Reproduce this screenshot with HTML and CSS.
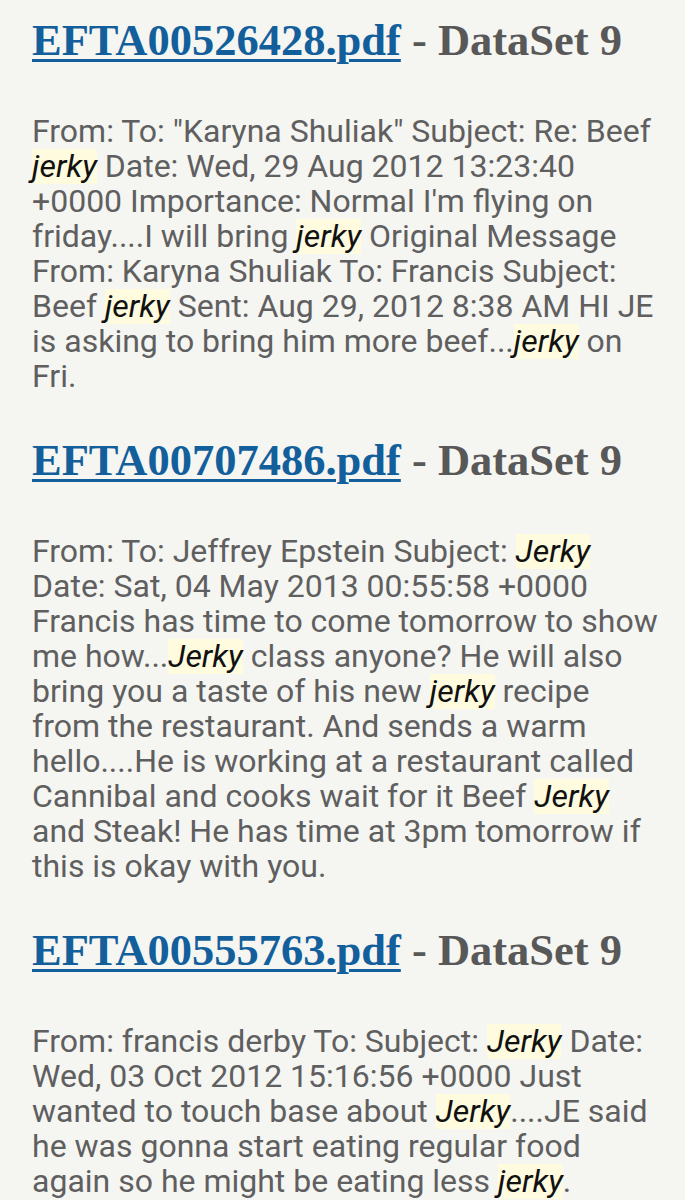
FILE: index.html
```html
<!DOCTYPE html>
<html lang="en">
<head>
  <meta charset="UTF-8" />
  <meta name="viewport" content="width=device-width, initial-scale=1" />
  <title>Search results: jerky</title>
  <link rel="stylesheet" href="styles.css">
</head>
<body>
  <div class="results">
    <div class="result">
      <h2 class="result-title"><a href="#">EFTA00526428.pdf</a> - DataSet 9</h2>
      <p class="snippet">From: To: "Karyna Shuliak" Subject: Re: Beef <em>jerky</em> Date: Wed, 29 Aug 2012 13:23:40 +0000 Importance: Normal I'm flying on friday....I will bring <em>jerky</em> Original Message From: Karyna Shuliak To: Francis Subject: Beef <em>jerky</em> Sent: Aug 29, 2012 8:38 AM HI JE is asking to bring him more beef...<em>jerky</em> on Fri.</p>
    </div>
    <div class="result">
      <h2 class="result-title"><a href="#">EFTA00707486.pdf</a> - DataSet 9</h2>
      <p class="snippet">From: To: Jeffrey Epstein Subject: <em>Jerky</em> Date: Sat, 04 May 2013 00:55:58 +0000 Francis has time to come tomorrow to show me how...<em>Jerky</em> class anyone? He will also bring you a taste of his new <em>jerky</em> recipe from the restaurant. And sends a warm hello....He is working at a restaurant called Cannibal and cooks wait for it Beef <em>Jerky</em> and Steak! He has time at 3pm tomorrow if this is okay with you.</p>
    </div>
    <div class="result">
      <h2 class="result-title"><a href="#">EFTA00555763.pdf</a> - DataSet 9</h2>
      <p class="snippet">From: francis derby To: Subject: <em>Jerky</em> Date: Wed, 03 Oct 2012 15:16:56 +0000 Just wanted to touch base about <em>Jerky</em>....JE said he was gonna start eating regular food again so he might be eating less <em>jerky</em>.</p>
    </div>
  </div>
</body>
</html>
```
FILE: styles.css
```css
body {
  margin: 0;
  background-color: #f5f5f2;
  font-family: Roboto, "Liberation Sans", sans-serif;
}

.results {
  display: flex;
  flex-direction: column;
  gap: 41px;
  padding: 15px 23px 40px 32px;
}

.result-title {
  margin: 0;
  font-family: "Liberation Serif", serif;
  font-size: 44.5px;
  font-weight: bold;
  line-height: 50px;
  color: #585858;
  white-space: nowrap;
}

.result-title a {
  color: #125f9c;
  text-decoration: underline;
  text-decoration-thickness: 3px;
  text-underline-offset: 4px;
}

.snippet {
  margin: 49px 0 0;
  font-size: 32px;
  line-height: 35px;
  color: #5f5f5f;
}

/* search term highlight */
.snippet em {
  display: inline-block;
  line-height: 35px;
  font-style: italic;
  color: #111111;
  background-color: #fefbdf;
}
```
